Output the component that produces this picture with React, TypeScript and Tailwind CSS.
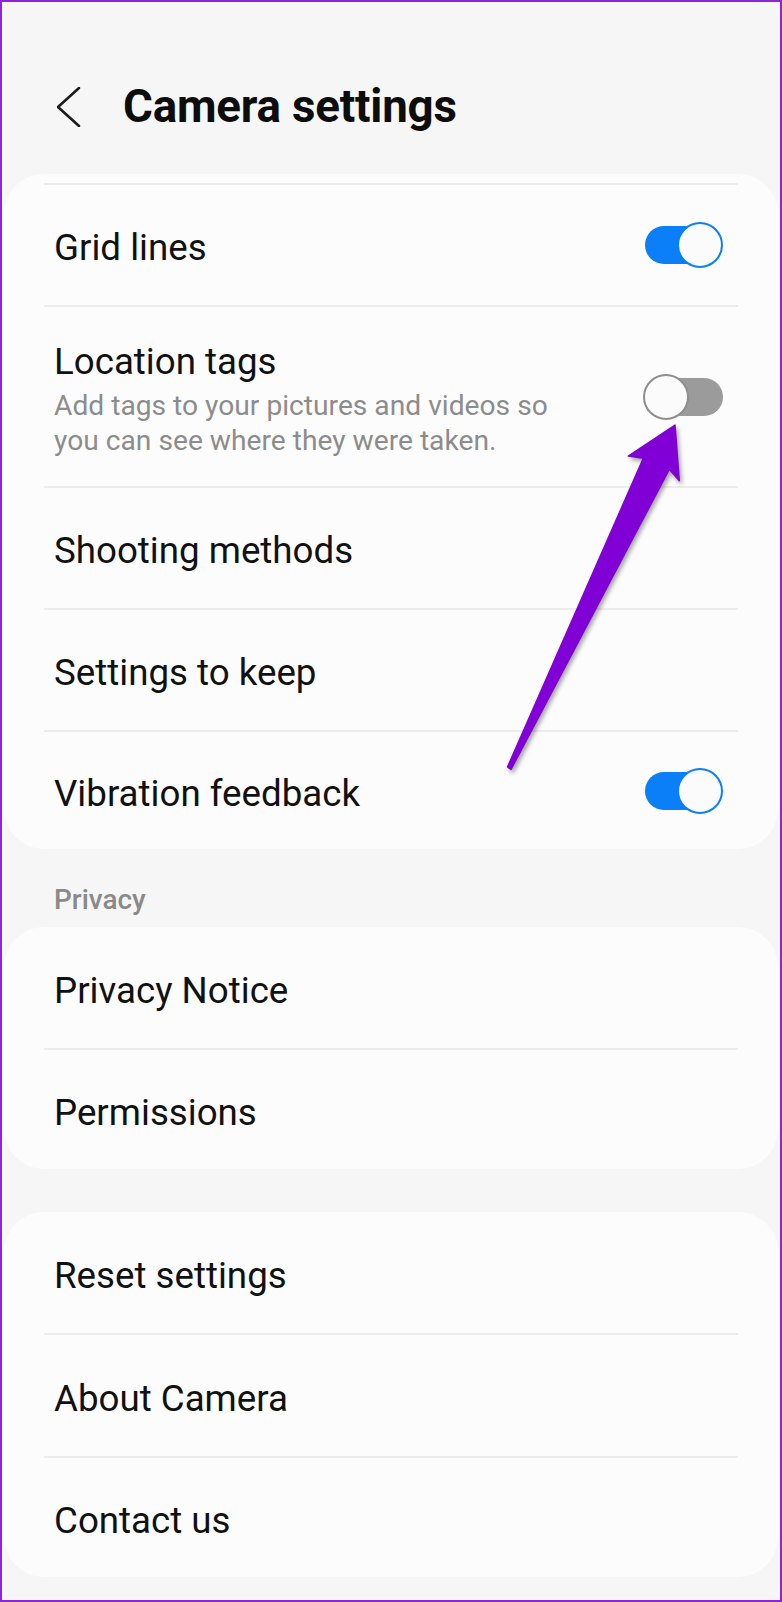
import React from 'react';

type Row = {
  label: string;
  sub?: string[];
  toggle?: 'on' | 'off';
  h?: string;
};

const Toggle: React.FC<{ on: boolean }> = ({ on }) => {
  if (on) {
    return (
      <div className="relative w-[78px] h-[46px] shrink-0">
        <div className="absolute left-0 top-[4px] h-[38px] w-[70px] rounded-full bg-[#0a7ff7]" />
        <div className="absolute right-0 top-0 w-[46px] h-[46px] rounded-full bg-[#fbfbfb] border-[2.5px] border-[#0a7ff7]" />
      </div>
    );
  }
  return (
    <div className="relative w-[80px] h-[46px] shrink-0">
      <div className="absolute right-0 top-[4px] h-[38px] w-[70px] rounded-full bg-[#9b9b9b]" />
      <div className="absolute left-0 top-0 w-[46px] h-[46px] rounded-full bg-[#fbfbfb] border-2 border-[#8e8e8e]" />
    </div>
  );
};

const Divider = () => <div className="mx-[40px] h-[2px] bg-[#ececec]" />;

const SettingRow: React.FC<{ row: Row }> = ({ row }) => (
  <div className={`flex items-center justify-between pl-[50px] pr-[55px] ${row.h ?? 'h-[121px]'}`}>
    <div className="flex flex-col pt-[6px]">
      <div className="text-[36.7px] leading-[40px] text-[#111111]">{row.label}</div>
      {row.sub && (
        <div className="mt-[6px] text-[28.2px] leading-[35px] text-[#8c8c8c]">
          {row.sub.map((line) => (
            <div key={line}>{line}</div>
          ))}
        </div>
      )}
    </div>
    {row.toggle && <Toggle on={row.toggle === 'on'} />}
  </div>
);

const Card: React.FC<{ rows: Row[]; topDivider?: boolean; className?: string }> = ({ rows, topDivider, className }) => (
  <div className={`mx-[2px] rounded-[40px] bg-[#fcfcfc] ${className ?? ''}`}>
    {topDivider && <div className="h-[9px]" />}
    {rows.map((row, i) => (
      <React.Fragment key={row.label}>
        {(i > 0 || topDivider) && <Divider />}
        <SettingRow row={row} />
      </React.Fragment>
    ))}
  </div>
);

const cameraRows: Row[] = [
  { label: 'Grid lines', toggle: 'on', h: 'h-[120px]' },
  {
    label: 'Location tags',
    sub: ['Add tags to your pictures and videos so', 'you can see where they were taken.'],
    toggle: 'off',
    h: 'h-[179px]',
  },
  { label: 'Shooting methods', h: 'h-[120px]' },
  { label: 'Settings to keep', h: 'h-[120px]' },
  { label: 'Vibration feedback', toggle: 'on', h: 'h-[117px]' },
];

const privacyRows: Row[] = [{ label: 'Privacy Notice' }, { label: 'Permissions', h: 'h-[119px]' }];

const aboutRows: Row[] = [{ label: 'Reset settings' }, { label: 'About Camera' }, { label: 'Contact us', h: 'h-[119px]' }];

export default function App() {
  return (
    <div
      className="relative w-[782px] h-[1602px] overflow-hidden border-2 border-[#8b25d9] bg-[#f6f6f6]"
      style={{ fontFamily: 'Roboto, "Noto Sans", sans-serif' }}
    >
      {/* header */}
      <div className="pt-[82px]">
        <div className="flex h-[46px] items-center pl-[55px]">
          <svg width="24" height="40" viewBox="0 0 24 40" className="shrink-0">
            <polyline points="22,1 1,20 22,39" fill="none" stroke="#1c1c1c" strokeWidth="2.6" strokeLinecap="round" strokeLinejoin="round" />
          </svg>
          <h1 className="ml-[42px] text-[45.7px] font-bold leading-none tracking-[-0.2px] text-[#0d0d0d]">Camera settings</h1>
        </div>
      </div>

      <Card rows={cameraRows} topDivider className="mt-[44px]" />

      <div className="pl-[52px] pt-[36px] pb-[12px] text-[27.9px] font-medium leading-[30px] text-[#8a8a8a]">Privacy</div>

      <Card rows={privacyRows} />

      <Card rows={aboutRows} className="mt-[43px]" />

      {/* annotation arrow */}
      <svg
        className="pointer-events-none absolute inset-0 drop-shadow-[2px_3px_2px_rgba(0,0,0,0.35)]"
        width="778"
        height="1598"
        viewBox="2 2 778 1598"
      >
        <polygon
          points="675,425 679.3,480.7 669.3,469.3 511,769.5 507.5,767 643.3,458.3 628.3,456"
          fill="#8000d6"
          stroke="#8000d6"
          strokeWidth="1.5"
          strokeLinejoin="round"
        />
      </svg>
    </div>
  );
}
